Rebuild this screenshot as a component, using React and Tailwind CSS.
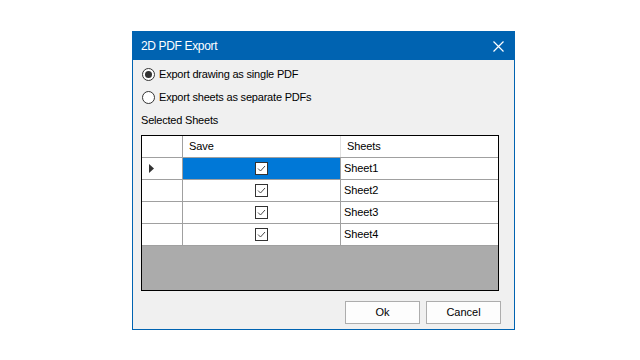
import React from "react";

const font = { fontFamily: '"Liberation Sans", Arial, sans-serif' };

function Radio({ checked }) {
  return (
    <svg width="13" height="13" viewBox="0 0 13 13" className="shrink-0">
      <circle cx="6.5" cy="6.5" r="6" fill="#ffffff" stroke="#333333" strokeWidth="1" />
      {checked && <circle cx="6.5" cy="6.5" r="3.5" fill="#333333" />}
    </svg>
  );
}

function Check() {
  return (
    <svg width="13" height="13" viewBox="0 0 13 13">
      <rect x="0.5" y="0.5" width="12" height="12" fill="#ffffff" stroke="#333333" strokeWidth="1" />
      <polyline points="3,6.5 5.5,9 10,4" fill="none" stroke="#4a4a4a" strokeWidth="1" />
    </svg>
  );
}

function Row({ name, selected }) {
  return (
    <div className="flex h-[22px] border-b border-[#a0a0a0] bg-white">
      <div className="w-[41px] border-r border-[#a0a0a0] flex items-center pl-[7px]">
        {selected && (
          <svg width="5" height="9" viewBox="0 0 5 9">
            <polygon points="0,0 5,4.5 0,9" fill="#333333" />
          </svg>
        )}
      </div>
      <div
        className={
          "w-[158px] border-r border-[#a0a0a0] flex items-center justify-center " +
          (selected ? "bg-[#0078d7]" : "bg-white")
        }
      >
        <Check />
      </div>
      <div className="w-[157px] flex items-center pl-[3px] text-[11px] text-black tracking-[-0.1px]">{name}</div>
    </div>
  );
}

export default function App() {
  return (
    <div className="w-[640px] h-[360px] bg-white pt-[31px] pl-[132px]" style={font}>
      <div className="w-[383px] h-[299px] border border-[#0063b1] bg-[#f0f0f0] flex flex-col">
        <div className="h-[28px] bg-[#0063b1] flex items-center justify-between pl-[8px] pr-[10px]">
          <span className="text-white text-[12px] tracking-[-0.35px]">2D PDF Export</span>
          <svg width="11" height="11" viewBox="0 0 11 11">
            <path d="M0.5 0.5 L10.5 10.5 M10.5 0.5 L0.5 10.5" stroke="#ffffff" strokeWidth="1.2" />
          </svg>
        </div>
        <div className="flex flex-col pt-[3px] pl-[9px] text-[11px] text-black tracking-[-0.2px]">
          <div className="h-[23px] flex items-center gap-[4px]">
            <Radio checked />
            <span>Export drawing as single PDF</span>
          </div>
          <div className="h-[23px] flex items-center gap-[4px]">
            <Radio />
            <span>Export sheets as separate PDFs</span>
          </div>
          <div className="h-[22px] flex items-center -ml-[1px]">Selected Sheets</div>
        </div>
        <div className="ml-[8px] mt-[4px] w-[358px] h-[156px] border border-black bg-[#ababab] flex flex-col">
          <div className="flex h-[22px] border-b border-[#a0a0a0] bg-white text-[11px] tracking-[-0.1px]">
            <div className="w-[41px] border-r border-[#a0a0a0]" />
            <div className="w-[158px] border-r border-[#e0e0e0] flex items-center pl-[6px]">Save</div>
            <div className="w-[157px] flex items-center pl-[6px]">Sheets</div>
          </div>
          <Row name="Sheet1" selected />
          <Row name="Sheet2" />
          <Row name="Sheet3" />
          <Row name="Sheet4" />
        </div>
        <div className="flex justify-end gap-[6px] mt-[10px] pr-[13px]">
          <button className="w-[75px] h-[23px] border border-[#adadad] bg-[#fdfdfd] text-[11px] text-black flex items-center justify-center">
            Ok
          </button>
          <button className="w-[75px] h-[23px] border border-[#adadad] bg-[#fdfdfd] text-[11px] text-black flex items-center justify-center">
            Cancel
          </button>
        </div>
      </div>
    </div>
  );
}
